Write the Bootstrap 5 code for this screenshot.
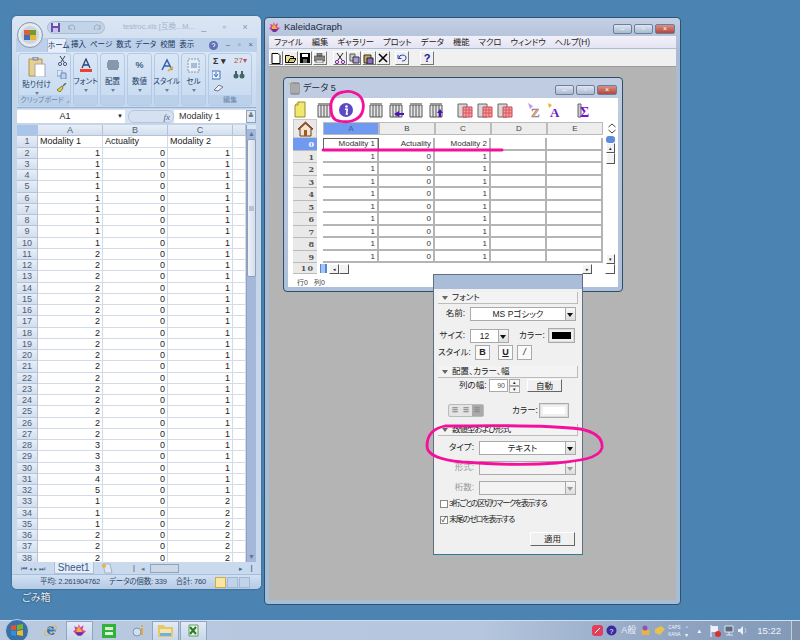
<!doctype html>
<html lang="ja"><head><meta charset="utf-8"><title>KaleidaGraph</title>
<link href="https://cdn.jsdelivr.net/npm/bootstrap@5.3.0/dist/css/bootstrap.min.css" rel="stylesheet">
<style>
body{margin:0;width:800px;height:640px;overflow:hidden;background:#4b83b2;font-family:"Liberation Sans","Noto Sans CJK JP",sans-serif;font-size:8px;line-height:1;color:#222;font-feature-settings:"palt"}
.desk{position:relative;width:800px;height:640px;overflow:hidden}
.win{position:absolute}
/* Excel */
.xl{left:12px;top:16px;width:249px;height:573px;border-radius:5px;background:linear-gradient(#dbe6f4,#c4d5ea 12%,#c9d9ed);padding:0 5px;box-shadow:0 0 2px #2c4f6f}
.xl-title{height:22px;padding-left:30px;color:#a3b3c8;font-size:7.5px}
.qat{width:58px;height:13px;background:#c3d3e8;border-radius:7px;border:1px solid #a7bcd8;gap:7px;padding-left:3px;margin-right:18px}
.xl-glyph{justify-content:space-around;color:#7f93ae;font-size:9px}
.xl-tabs{height:14px;padding-left:31px;background:#bdd0e9;margin:0 -1px}
.xl-tabs span{padding:0 2px;color:#15345e;font-size:7.5px;white-space:nowrap;line-height:14px}
.xl-tabs .on{background:#e6eff9;border:1px solid #a9bfdb;border-bottom:0;border-radius:2px 2px 0 0;width:20px;padding:0;text-align:center;margin-right:2px}
.ribbon{height:56px;background:linear-gradient(#dbe7f6,#c5d8ef);border-bottom:1px solid #97b0d1;padding:1px;gap:2px}
.rg{width:25px;background:linear-gradient(#d9e6f6,#c6daf0);border:1px solid #b4cae4;border-radius:3px;align-items:center;color:#1a3a66;font-size:8px;text-align:center;line-height:1}
.rg small{font-size:7.5px;margin-top:5px;white-space:nowrap}
.rg i{display:block;border-top:3px solid #6c7f9b;border-left:2px solid transparent;border-right:2px solid transparent;margin-top:3px;width:0}
.rg-clip{width:53px}.rg-edit{width:44px}
.rg-foot{margin-top:auto;width:100%;background:#bbd1ea;height:10px;line-height:10px;color:#6a86ab;font-size:7px;white-space:nowrap}
.xl-fx{height:14px;margin-top:1px;background:#d5e2f3;font-size:9px}
.fx-name{width:108px;background:#fff;text-align:center;position:relative;line-height:13px;height:13px;padding-right:12px}
.fx-pill{width:46px;background:#d5e1f1;border:1px solid #b4c6de;border-radius:6px;height:13px;text-align:right;padding-right:3px;font-style:italic;font-family:"Liberation Serif",serif;color:#51627c;line-height:12px}
.fx-val{flex:1;background:#fff;padding-left:5px;line-height:13px;height:13px;color:#333}
.fx-exp{width:10px;height:13px;background:#dfe9f6;border:1px solid #8ba4c4;text-align:center;line-height:9px;font-size:7px}
.xl-body{height:437px;margin-top:2px;overflow:hidden;background:#fff}
.sheet{width:229px;flex:none;display:grid;grid-template-columns:21px 65px 65px 65px 13px;grid-auto-rows:11.25px;font-size:9px;color:#222;overflow:hidden}
.sheet div{border-right:1px solid #d5dbe6;border-bottom:1px solid #d5dbe6;line-height:10.5px;padding:0 2px;text-align:right;white-space:nowrap;overflow:hidden}
.sheet .h{background:linear-gradient(#e7eef8,#d3deed);color:#4c5c75;text-align:center;border-color:#b5c3d8}
.sheet .c{background:#a9c5e9}
.sheet .l{text-align:left}
.vsb{width:10px;background:#a6b8d9;border-left:1px solid #8ea2c6}
.vsb b{display:block;height:10px;background:#a6b8d9;text-align:center;color:#5d7597;font-size:7px;line-height:9px;font-weight:400}
.vsb .t{background:#dbe6f4;height:4px}
.vsb u{display:flex;align-items:center;justify-content:center;height:138px;background:linear-gradient(90deg,#eef2f8,#d6deea);border:1px solid #8f9fb9;border-radius:2px;margin-bottom:auto}
.vsb u::after{content:"";width:5px;height:5px;background:#b9c3d2}
.xl-tab{height:12px;background:#cadaee;font-size:7px;color:#4a6488;gap:5px}
.sheet1{font-size:10px;background:#e4edf8;padding:0 3px;height:12px;line-height:12px;border:1px solid #a9bfdb;border-top:0;color:#3b5a85}
.xl-status{height:15px;background:linear-gradient(#d2e0f2,#b5cae5);margin:0 -5px;padding:0 14px 0 28px;color:#2b4668;font-size:7.5px;border-radius:0 0 5px 5px;gap:9px;white-space:nowrap;border-top:1px solid #a8bfdb;letter-spacing:-.2px}
.view{width:11px;height:11px;background:#c1d3ea;border:1px solid #a1b7d4}
.view.on{background:#fbe6a1;border-color:#cfa94f}
.bin{left:22px;top:593px;color:#e8f0f8;font-size:10px;text-shadow:0 0 2px #123}
/* Kaleida */
.kg{left:264px;top:17px;width:417px;height:588px;border:1px solid #2f536f;border-radius:4px;background:linear-gradient(#c3cfe4,#a9bad5 6%,#a5bdd6);padding:0 4px 4px;display:flex;flex-direction:column}
.cap{height:18px;gap:4px;color:#1b2a3d;font-size:9.500px}
.caps{margin-left:auto;gap:2px;margin-top:3px;margin-right:1px}
.cb{width:19px;height:10px;border:1px solid #6c7e98;background:linear-gradient(#dfe6f0,#aabad0);font-size:7px;color:#fff;text-align:center;line-height:8px;border-radius:2px}
.cb.x{width:20px;background:linear-gradient(#d99086,#b4473b)}
.menu{height:12px;background:linear-gradient(#f2f1f9,#e4e4f3);gap:9px;padding-left:5px;font-size:8.300px;color:#1b1b1b;line-height:12px;white-space:nowrap}
.kbar{height:18px;background:#f0f0f0;padding:2px 0 2px 0;margin-top:1px;border-bottom:1px solid #9b9b9b;gap:.5px}
.kb{width:14px;height:14px;background:#efefef;border:1px solid;border-color:#fff #777 #777 #fff;padding:0;flex:none;display:flex;align-items:center;justify-content:center}
.mdi{flex:1;background:#b4b4b4;position:relative}
.dw{left:14px;top:10px;width:340px;height:215px;border:1px solid #2c4f6a;border-radius:4px;background:linear-gradient(#c0cde2,#aebfd9);padding:0 4px 4px;display:flex;flex-direction:column}
.dw .cap{height:20px;padding-left:1px;font-size:9px;gap:2px}
.dw-in{flex:1;background:#fff;padding:2px 0 0 4px;position:relative}
.dtb{height:19px;gap:4px}
.dtb svg{width:16px;height:16px;flex:none;overflow:visible}
.grid-h{height:19px;align-items:center}
.home{width:24px;height:19px;display:flex;justify-content:center;align-items:center;background:#e8e8e8;border:1px solid #c9c9c9;margin-right:6px;margin-left:1px;flex:none}
.colh{width:56px;height:13px;background:#ededed;border:1px solid #bbb;text-align:center;color:#444;line-height:12px;font-size:8px;flex:none}
.colh.on{background:#6f9af0;color:#3b5ea8}
.grid-r{height:12.560px;align-items:stretch}
.rowh{width:24px;margin:0 6px 0 1px;background:#e9e9e9;text-align:right;padding-right:3px;font:700 8px/12px "DejaVu Serif","Liberation Serif",serif;color:#555;border-bottom:1px solid #bbb;flex:none}
.rowh.on{background:#6f9af0;color:#fff}
.cell{width:56px;background:#fff;border-right:2px solid #b4b4b4;border-bottom:2px solid #b4b4b4;text-align:right;padding-right:2px;line-height:11px;font-size:8px;color:#333;flex:none;white-space:nowrap}
.cell.sel{outline:1px solid #666;outline-offset:-1px}
.dsb{width:14px;flex:none;margin-left:2px}
.sb{width:10px;height:10px;background:#f3f3f3;border:1px solid;border-color:#fff #555 #555 #fff;flex:none;font-size:5px;line-height:8px;text-align:center}
.dstat{font-size:7px;color:#444;padding:5px 0 0 5px;gap:6px}
/* inspector */
.insp{left:433px;top:274px;width:150px;height:281px;border:1px solid #5f6f7f;border-bottom-color:#2f7b9c;background:#f0f0f0;font-size:8.500px;color:#222;padding:14px 4px 0;box-shadow:inset 0 14px 0 #a9bdd9}
.sec{height:12px;background:#f3f3f3;border:1px solid #bcbcbc;border-width:0 1px 1px 0;padding-left:4px;gap:4px;line-height:11px;margin-top:3px;white-space:nowrap}
.sec::before{content:"";border-top:4px solid #666;border-left:3px solid transparent;border-right:3px solid transparent}
.frow{height:15px;margin-top:4px}
.lab{width:27px;text-align:right;margin-right:5px;white-space:nowrap;flex:none}
.sel-box{background:#fff;border:1px solid #aaa;height:14px;position:relative;text-align:center;line-height:13px;padding-right:10px;flex:none}
.sel-box::after{content:"";position:absolute;right:0;top:0;bottom:0;width:10px;background:linear-gradient(#f8f8f8,#ddd);border-left:1px solid #aaa}
.sel-box::before{content:"";position:absolute;z-index:1;right:2px;top:5px;border-top:4px solid #111;border-left:3px solid transparent;border-right:3px solid transparent}
.sel-box.off{background:#f3f3f3}.sel-box.off::before{border-top-color:#999}
.inbox{background:#fff;border:1px solid #aaa;width:19px;height:13px;font-size:7px;line-height:12px;color:#555;text-align:right;padding-right:2px;flex:none}
.spin{width:11px;margin:0 7px 0 1px;font-size:5px;line-height:5px;text-align:center;flex:none;height:13px}
.spin span{border:1px solid #aaa;background:#f7f7f7;height:7px}
.swatch{width:27px;height:15px;border:2px solid #ddd;outline:1px solid #aaa;outline-offset:-1px;padding:2px;flex:none}
.swatch b{display:block;height:100%}
.ibtn{width:15px;height:15px;border:1px solid #aaa;background:#fafafa;text-align:center;line-height:13px;font-size:9px;font-weight:700;font-family:"Liberation Sans",sans-serif;flex:none}
.rbtn{background:#f0f0f0;border:1px solid;border-color:#fff #666 #666 #fff;text-align:center;font-size:8.500px;padding:0;color:#222;border-radius:0;flex:none}
.chk{height:14px;gap:1px;padding-left:2px;white-space:nowrap;font-size:8px;letter-spacing:-1.200px}
.chk span{width:8px;height:8px;background:#fff;border:1px solid #888;flex:none;position:relative;font-size:8px;line-height:6px;text-align:center;letter-spacing:0}
.off-t{color:#999}
/* taskbar */
.task{left:0;top:620px;width:800px;height:20px;background:linear-gradient(90deg,#b9c9e0,#b5c6de 60%,#8ea3c1 85%,#8299b8);border-top:1px solid #d3deec;display:flex;align-items:center}
.tb-i{width:27px;height:20px;display:flex;align-items:center;justify-content:center;flex:none}
.tb-i.act{background:linear-gradient(#e2ebf6,#c8d7ea);border:1px solid #8ea5c3;height:20px}
.tray{margin-left:auto;gap:3px;color:#f4f7fb;font-size:8px;padding-right:0}
.time{font-size:9.500px;margin:0 7px 0 6px;color:#edf2f8;white-space:nowrap}
.showd{width:9px;height:20px;background:#7f93ad;border-left:1px solid #c2cfdf}
.ink{left:0;top:0;width:800px;height:640px;pointer-events:none}
</style></head><body>
<svg width="0" height="0" class="position-absolute"><defs>
<symbol id="cols" viewBox="0 0 16 16"><path d="M2 3h12v12H2z" fill="#e5e5e5" stroke="#555"/><path d="M5 3v12M8 3v12M11 3v12" stroke="#555" fill="none"/><path d="M2 1h12v2H2z" fill="#999"/></symbol>
<symbol id="red" viewBox="0 0 16 16"><path d="M1 2h9v13H1z" fill="#d8d8d8" stroke="#666"/><path d="M6 5h9v10H6z" fill="#f0a0a8" stroke="#c45"/><path d="M6 8h9M6 11h9M9 5v10M12 5v10" stroke="#d55" fill="none"/></symbol>
</defs></svg>
<div class="desk">

<section class="win xl d-flex flex-column">
  <div class="xl-title d-flex align-items-center">
    <div class="qat d-flex align-items-center flex-none">
      <svg width="9" height="9" viewBox="0 0 9 9"><path d="M0 0h9v9H0z" fill="#6a4fb0"/><path d="M2 0h5v3H2z" fill="#dfe6f5"/><path d="M2 5h5v4H2z" fill="#c9c4e8"/></svg>
      <svg width="9" height="9" viewBox="0 0 9 9"><path d="M2 6a3 3 0 1 1 5 1M2 2v4h3" fill="none" stroke="#9aaac0"/></svg>
      <span style="width:3px"></span>
      <svg width="9" height="9" viewBox="0 0 9 9"><path d="M7 6a3 3 0 1 0-5 1M7 2v4H4" fill="none" stroke="#9aaac0"/></svg>
    </div>
    <span class="text-nowrap" style="width:70px">testroc.xls [互換...M...</span>
    <span class="d-flex xl-glyph flex-grow-1"><span>_</span><span>▫</span><span>×</span></span>
  </div>
  <div class="xl-tabs d-flex align-items-stretch">
    <span class="on">ホーム</span><span>挿入</span><span>ページ</span><span>数式</span><span>データ</span><span>校閲</span><span>表示</span>
    <span class="ms-auto d-flex align-items-center gap-2" style="padding:0 4px 0 0;color:#445b7c">
      <svg width="9" height="9" viewBox="0 0 9 9"><circle cx="4.500" cy="4.500" r="4.500" fill="#5f70b8"/><path d="M3 3.500a1.500 1.300 0 1 1 1.800 1.500V6" stroke="#fff" fill="none"/></svg><b class="fw-normal">–</b><b class="fw-normal">▫</b><b class="fw-normal">×</b>
    </span>
  </div>
  <div class="ribbon d-flex">
    <div class="rg rg-clip d-flex flex-column">
      <div class="d-flex w-100" style="height:42px">
        <div class="d-flex flex-column align-items-center" style="width:35px;margin-top:3px">
          <svg width="20" height="20" viewBox="0 0 20 20"><path d="M2 2h13v17H2z" fill="#e8cf92" stroke="#b09252"/><path d="M6 0h5v3H6z" fill="#bfc5d1" stroke="#7a8498"/><path d="M8 7h10v13H8z" fill="#fff" stroke="#a2a9b6"/></svg>
          <small class="mt-1">貼り付け</small><i></i>
        </div>
        <div class="d-flex flex-column align-items-center" style="width:16px;gap:4px;margin-top:2px">
          <svg width="9" height="10" viewBox="0 0 9 10"><path d="M2 0l4 6M7 0L3 6" stroke="#445"/><circle cx="2" cy="8" r="1.600" fill="none" stroke="#558"/><circle cx="7" cy="8" r="1.600" fill="none" stroke="#558"/></svg>
          <svg width="10" height="9" viewBox="0 0 10 9"><path d="M0 0h5v6H0z" fill="#dfe8f5" stroke="#7f9ac2"/><path d="M4 3h5v6H4z" fill="#bcd1ee" stroke="#6a8abf"/></svg>
          <svg width="10" height="9" viewBox="0 0 10 9"><path d="M0 7l5-4 1 2-3 4z" fill="#e7d055" stroke="#8a7a22"/><path d="M6 3l3-3" stroke="#666" stroke-width="1.500"/></svg>
        </div>
      </div>
      <div class="rg-foot">クリップボード ⌟</div>
    </div>
    <div class="rg d-flex flex-column"><svg class="mt-1" width="18" height="15" viewBox="0 0 18 15"><path d="M5 10L9 1l4 9M6.500 7h5" stroke="#25476f" fill="none" stroke-width="1.300"/><path d="M3 11h12v3H3z" fill="#ee4130"/></svg><small>フォント</small><i></i><div class="rg-foot"></div></div>
    <div class="rg d-flex flex-column"><svg class="mt-1" width="18" height="15" viewBox="0 0 18 15"><path d="M4 3h10M3 5h12M3 7h12M3 9h12M4 11h10" stroke="#3d4b61"/></svg><small>配置</small><i></i><div class="rg-foot"></div></div>
    <div class="rg d-flex flex-column"><span class="mt-1" style="height:15px;line-height:15px;font-size:9px;font-weight:700;color:#48607e">%</span><small>数値</small><i></i><div class="rg-foot"></div></div>
    <div class="rg d-flex flex-column"><svg class="mt-1" width="18" height="15" viewBox="0 0 18 15"><path d="M4 12L9 2l5 10M6 8h6" stroke="#3a5db0" fill="none" stroke-width="1.500"/><path d="M10 13l5-4" stroke="#d9b440" stroke-width="2"/></svg><small>スタイル</small><i></i><div class="rg-foot"></div></div>
    <div class="rg d-flex flex-column"><svg class="mt-1" width="18" height="15" viewBox="0 0 18 15"><path d="M3 1h11v13H3z" fill="#e5edf6" stroke="#8797ae" stroke-dasharray="2 1"/><path d="M6 5h6v5H6z" fill="#a8bcd6"/></svg><small>セル</small><i></i><div class="rg-foot"></div></div>
    <div class="rg rg-edit d-flex flex-column"><div class="d-flex flex-wrap justify-content-center" style="gap:4px 5px;margin-top:3px;width:42px">
      <span style="font-size:9px;font-weight:700;width:16px;color:#333">Σ ▾</span><span style="font-size:8px;width:16px;color:#b35353">27▾</span>
      <svg width="16" height="10" viewBox="0 0 16 10"><path d="M0 1h8v8H0z" fill="#eef3fb" stroke="#3d6fbe"/><path d="M4 2v4M2 4l2 3 2-3" stroke="#3d6fbe" fill="none"/></svg><svg width="16" height="10" viewBox="0 0 16 10"><circle cx="3" cy="6" r="2.500" fill="#466"/><circle cx="9" cy="6" r="2.500" fill="#466"/><path d="M3 1v3M9 1v3" stroke="#466" stroke-width="2"/></svg>
      <svg width="14" height="8" viewBox="0 0 14 8"><path d="M1 6l5-5 4 2-5 4z" fill="#eef" stroke="#778"/></svg><span style="width:16px"></span></div>
      <div class="rg-foot">編集</div></div>
  </div>
  <div class="xl-fx d-flex align-items-center">
    <div class="fx-name">A1<b class="position-absolute fw-normal" style="right:2px;font-size:6px">▼</b></div><span style="width:3px"></span>
    <div class="fx-pill">fx</div>
    <div class="fx-val">Modality 1</div>
    <div class="fx-exp">≚</div>
  </div>
  <div class="xl-body d-flex">
    <div class="sheet" id="sheet"></div>
    <div class="vsb d-flex flex-column flex-grow-1"><b class="t"></b><b>▲</b><u></u><b>▼</b></div>
  </div>
  <div class="xl-tab d-flex align-items-center ps-1">
    <span>⏮ ◂ ▸ ⏭</span><span class="sheet1 ms-1">Sheet1</span>
    <svg width="15" height="11" viewBox="0 0 15 11"><path d="M4 1h7l2 9H6z" fill="#dfe8f4" stroke="#9fb3cf"/><circle cx="5" cy="3" r="2" fill="#e5b548"/></svg>
    <span style="margin-left:15px;color:#777">▏◂</span>
    <span style="width:29px;height:9px;background:#cdd8e6;border:1px solid #8fa3bd"></span>
    <span class="ms-auto me-1">▸ ▕</span>
  </div>
  <div class="xl-status d-flex align-items-center">
    <span>平均: 2.261904762</span><span>データの個数: 339</span><span>合計: 760</span>
    <span class="ms-auto d-flex" style="gap:1px"><span class="view on"></span><span class="view"></span><span class="view"></span></span>
  </div>
</section>
<svg class="win" style="left:17px;top:22px" width="26" height="26" viewBox="0 0 26 26"><circle cx="13" cy="13" r="12.500" fill="#e6e9ee" stroke="#8494ac"/><circle cx="13" cy="13" r="9" fill="#cbd4e0"/><path d="M7 8h6v5H7z" fill="#d9642d"/><path d="M13 8h6v5h-6z" fill="#6f9d33"/><path d="M7 13h6v5H7z" fill="#3b6fc2"/><path d="M13 13h6v5h-6z" fill="#edb62e"/></svg>
<div class="win bin">ごみ箱</div>

<section class="win kg">
  <div class="cap d-flex align-items-center">
    <svg width="11" height="11" viewBox="0 0 11 11"><path d="M1 2l3 1 1-3 1 3 3-2-1 4 3 1-3 3H3L0 6l2-1z" fill="#e33e9c"/><path d="M3 5l2-3 2 3 1 2H3z" fill="#e6b52a"/><path d="M2 7h7l-2 3H4z" fill="#6d2ea8"/></svg>
    <span>KaleidaGraph</span>
    <div class="caps d-flex"><span class="cb">–</span><span class="cb">▫</span><span class="cb x">×</span></div>
  </div>
  <nav class="menu d-flex"><span>ファイル</span><span>編集</span><span>ギャラリー</span><span>プロット</span><span>データ</span><span>機能</span><span>マクロ</span><span>ウィンドウ</span><span>ヘルプ(H)</span></nav>
  <div class="kbar d-flex">
    <span class="kb"><svg width="10" height="11" viewBox="0 0 10 11"><path d="M1 .5h6l2 2v8H1z" fill="#fff" stroke="#000"/></svg></span>
    <span class="kb"><svg width="11" height="10" viewBox="0 0 11 10"><path d="M.5 2.500h4l1 1h3v6h-8z" fill="#ece08c" stroke="#000"/><path d="M3 9.500l2-4h6l-2 4z" fill="#d8c660" stroke="#000"/></svg></span>
    <span class="kb"><svg width="10" height="10" viewBox="0 0 10 10"><path d="M0 0h10v10H0z" fill="#000"/><path d="M2 1h6v3H2z" fill="#fff"/><path d="M3 6h4v4H3z" fill="#666"/></svg></span>
    <span class="kb"><svg width="11" height="10" viewBox="0 0 11 10"><path d="M3 0h5v3H3zM0 3h11v5H0z" fill="#888" stroke="#333" stroke-width=".5"/><path d="M2 7h7v3H2z" fill="#ddd" stroke="#333" stroke-width=".5"/></svg></span>
    <span style="width:5px"></span>
    <span class="kb"><svg width="10" height="11" viewBox="0 0 10 11"><path d="M2 0l5 7M8 0L3 7" stroke="#222"/><circle cx="2" cy="9" r="1.600" fill="none" stroke="#7a1fa2"/><circle cx="8" cy="9" r="1.600" fill="none" stroke="#7a1fa2"/></svg></span>
    <span class="kb"><svg width="11" height="11" viewBox="0 0 11 11"><path d="M1 1h5v7H1z" fill="#ccc" stroke="#555"/><path d="M4 4h6v6H4z" fill="#b09ad8" stroke="#333"/></svg></span>
    <span class="kb"><svg width="11" height="11" viewBox="0 0 11 11"><path d="M1 2h7v8H1z" fill="#c7a65a" stroke="#333"/><path d="M4 5h6v6H4z" fill="#8a6fc8" stroke="#222"/></svg></span>
    <span class="kb"><svg width="10" height="10" viewBox="0 0 10 10"><path d="M1 1l8 8M9 1L1 9" stroke="#000" stroke-width="1.500"/></svg></span>
    <span style="width:4px"></span>
    <span class="kb"><svg width="10" height="8" viewBox="0 0 10 8"><path d="M2 4a3.500 3 0 1 1 3 3M1 1v3.500h3.500" stroke="#2d3fb5" fill="none"/></svg></span>
    <span style="width:10px"></span>
    <span class="kb" style="color:#1b149c;font-weight:700;font-size:11px;font-family:'Liberation Sans',sans-serif">?</span>
  </div>
  <div class="mdi">
    <section class="win dw">
      <div class="cap d-flex align-items-center">
        <svg width="12" height="13" viewBox="0 0 12 13"><path d="M2 1h8v11H2z" fill="#ddd" stroke="#777"/><path d="M4 1v11M6 1v11M8 1v11" stroke="#777"/><path d="M0 2h3l1-1" stroke="#c9b227" fill="none"/></svg>
        <span>データ 5</span>
        <div class="caps d-flex"><span class="cb">–</span><span class="cb">▫</span><span class="cb x">×</span></div>
      </div>
      <div class="dw-in">
        <div class="dtb d-flex align-items-center">
          <svg viewBox="0 0 16 16"><path d="M3 3l3-3h7v15H3z" fill="#f1e86f" stroke="#9a8d2a"/><path d="M3 3h3V0" fill="#fff7a8" stroke="#9a8d2a"/></svg>
          <svg style="margin-left:4px"><use href="#cols"/></svg>
          <svg viewBox="0 0 16 16" style="margin-left:2px"><circle cx="8" cy="8" r="7" fill="#5a48c4"/><circle cx="8.500" cy="4.500" r="1.300" fill="#fff"/><path d="M7 7.200h2.300L8.500 12H10" stroke="#fff" stroke-width="1.600" fill="none"/></svg>
          <svg style="margin-left:10px"><use href="#cols"/></svg>
          <svg viewBox="0 0 16 16"><use href="#cols"/><path d="M16 11h-5v-2l-5 3 5 3v-2h5z" fill="#4b14b5"/></svg>
          <svg><use href="#cols"/></svg>
          <svg viewBox="0 0 16 16"><use href="#cols"/><path d="M12 7l-3 4h2v4h2v-4h2z" fill="#4b14b5"/></svg>
          <svg style="margin-left:9px"><use href="#red"/></svg>
          <svg><use href="#red"/></svg>
          <svg><use href="#red"/></svg>
          <svg viewBox="0 0 16 16" style="margin-left:10px"><path d="M1 1l5 3-3 3z" fill="#bb9be8"/><text x="4" y="15" font-size="13" font-weight="700" font-family="Liberation Serif" fill="#e8b61c" stroke="#8a5fd0" stroke-width=".4">Z</text></svg>
          <svg viewBox="0 0 16 16"><path d="M1 1l4 2-3 3z" fill="#e8b61c"/><text x="3" y="15" font-size="13" font-weight="700" font-family="Liberation Serif" fill="#6d18d0">A</text></svg>
          <svg viewBox="0 0 16 16" style="margin-left:10px"><path d="M1 2h3v13H1z" fill="#ccc" stroke="#666"/><text x="3" y="15" font-size="14" font-weight="700" font-family="Liberation Serif" fill="#7a10d8">Σ</text></svg>
        </div>
        <div class="grid-h d-flex">
          <span class="home"><svg width="17" height="16" viewBox="0 0 17 16"><path d="M8.500 1L1 8h2v7h11V8h2z" fill="#f4e5cf" stroke="#6b3c1f"/><path d="M7 9h3v6H7z" fill="#a05a26"/><path d="M8.500 1L1 8l1 1 6.500-6 6.500 6 1-1z" fill="#8a4a22"/></svg></span>
          <span class="colh on">A</span><span class="colh">B</span><span class="colh">C</span><span class="colh">D</span><span class="colh">E</span>
          <svg class="dsb" width="9" height="13" viewBox="0 0 9 13"><path d="M1 5l3.500-3L8 5M1 8l3.500 3L8 8" fill="none" stroke="#444"/></svg>
        </div>
        <div id="dgrid"></div>
        <div class="d-flex align-items-center" style="height:11px">
          <span class="rowh" style="height:11px;line-height:10px;letter-spacing:1px;margin-right:3px">10</span>
          <svg width="7" height="9" viewBox="0 0 7 9"><path d="M0 0h7v9H0z" fill="#4f8ad6"/><path d="M2 0v9M4 0v9" stroke="#fff"/></svg>
          <span class="sb" style="margin-left:2px">◂</span><span class="sb" style="margin-right:auto"></span>
          <span class="sb" style="margin-right:13px">▸</span><span class="sb" style="width:10px;margin-right:3px;background:#fff"></span>
        </div>
        <div class="dstat d-flex"><span>行0</span><span>列0</span></div>
        <div class="position-absolute d-flex flex-column" style="right:3px;top:38px;width:9px;height:128px"><span style="height:7px;background:#5c8be0;border-radius:3px"></span><span class="sb" style="width:9px">▴</span><span class="sb" style="width:9px;height:11px"></span><span class="sb mt-auto" style="width:9px">▾</span></div>
      </div>
    </section>
  </div>
</section>

<section class="win insp">
  <div class="sec d-flex align-items-center">フォント</div>
  <div class="frow d-flex align-items-center" style="margin-top:2px"><span class="lab">名前:</span><div class="sel-box" style="width:106px">MS Pゴシック</div></div>
  <div class="frow d-flex align-items-center" style="margin-top:7px"><span class="lab">サイズ:</span><div class="sel-box" style="width:39px">12</div><span class="text-nowrap" style="width:26px;margin-left:10px">カラー:</span><span class="swatch" style="margin-left:3px"><b class="bg-black"></b></span></div>
  <div class="frow d-flex align-items-center" style="margin-top:2px"><span class="lab" style="width:32px">スタイル:</span><span class="ibtn">B</span><span class="ibtn ms-2"><u>U</u></span><span class="ibtn ms-1 fst-italic fw-normal">/</span></div>
  <div class="sec d-flex align-items-center" style="margin-top:6px">配置、カラー、幅</div>
  <div class="frow d-flex align-items-center" style="margin-top:0;padding-left:21px"><span class="text-nowrap" style="width:30px">列の幅:</span><span class="inbox">90</span><span class="spin d-flex flex-column"><span>▴</span><span>▾</span></span><button class="rbtn" style="width:35px;height:13px;line-height:10px">自動</button></div>
  <div class="d-flex align-items-center" style="margin-top:10px;padding-left:10px"><span class="d-flex" style="width:36px;height:13px;border:1px solid #bbb;border-radius:2px;background:#e4e4e4;font-size:6px;line-height:11px;color:#888;text-align:center"><span class="flex-fill">☰</span><span class="flex-fill">☰</span><span class="flex-fill" style="background:#aaa">☰</span></span><span class="text-nowrap" style="margin-left:28px;width:27px">カラー:</span><span class="swatch" style="width:30px"><b class="bg-white"></b></span></div>
  <div class="sec d-flex align-items-center" style="margin-top:6px;letter-spacing:-1px">数値型および形式</div>
  <div class="frow d-flex align-items-center" style="margin-top:4px"><span class="lab" style="width:36px">タイプ:</span><div class="sel-box" style="width:97px">テキスト</div></div>
  <div class="frow d-flex align-items-center" style="margin-top:5px"><span class="lab off-t" style="width:36px">形式:</span><div class="sel-box off" style="width:97px"></div></div>
  <div class="frow d-flex align-items-center" style="margin-top:5px"><span class="lab off-t" style="width:36px">桁数:</span><div class="sel-box off" style="width:97px"></div></div>
  <div class="chk d-flex align-items-center" style="margin-top:2px"><span></span>3桁ごとの区切りマークを表示する</div>
  <div class="chk d-flex align-items-center" style="margin-top:2px"><span>✓</span>末尾のゼロを表示する</div>
  <div class="d-flex justify-content-end" style="padding-right:3px;margin-top:5px"><button class="rbtn" style="width:45px;height:14px;line-height:12px">適用</button></div>
</section>

<footer class="win task">
  <svg width="24" height="24" viewBox="0 0 24 24" style="margin:0 0 0 5px;overflow:visible"><circle cx="12" cy="12" r="11.500" fill="#3a6fa8" stroke="#bcd0e6"/><path d="M6 7l5-1v5H6z" fill="#e4542c"/><path d="M12 6l6-1v5l-6 1z" fill="#79b32d"/><path d="M6 12h5v5l-5-1z" fill="#2e93d8"/><path d="M12 12l6-1v6l-6-1z" fill="#edbb27"/></svg>
  <span class="tb-i ms-2"><svg width="15" height="15" viewBox="0 0 15 15"><path d="M13 7.500H5a3 3 0 0 1 5.500-2M11 10a3.500 3.500 0 0 1-6-2" fill="none" stroke="#2a6fc4" stroke-width="2"/><ellipse cx="7.500" cy="7.500" rx="7" ry="3" fill="none" stroke="#e5b53b" transform="rotate(-35 7.500 7.500)"/></svg></span>
  <span class="tb-i act" style="margin-left:2px"><svg width="13" height="13" viewBox="0 0 11 11"><path d="M1 2l3 1 1-3 1 3 3-2-1 4 3 1-3 3H3L0 6l2-1z" fill="#e33e9c"/><path d="M3 5l2-3 2 3 1 2H3z" fill="#e6b52a"/><path d="M2 7h7l-2 3H4z" fill="#6d2ea8"/></svg></span>
  <span class="tb-i" style="margin-left:2px"><svg width="14" height="14" viewBox="0 0 14 14"><path d="M0 0h14v14H0z" fill="#30b33c"/><path d="M3 3h8v3H3z" fill="#d9f0c8"/><path d="M3 8h8v3H3z" fill="#e7f3e0"/></svg></span>
  <span class="tb-i" style="margin-left:2px"><svg width="14" height="14" viewBox="0 0 14 14"><circle cx="6" cy="8" r="4" fill="#cfe0f2" stroke="#7f95b5"/><path d="M11 4v7" stroke="#e5a63a" stroke-width="2"/><circle cx="11" cy="2" r="1" fill="#e5a63a"/></svg></span>
  <span class="tb-i act" style="margin-left:1px"><svg width="15" height="13" viewBox="0 0 15 13"><path d="M0 1h6l1 2h8v10H0z" fill="#e8c766"/><path d="M2 5h11v6H2z" fill="#f6e5a8"/><path d="M2 9h11v3H2z" fill="#73aee0"/></svg></span>
  <span class="tb-i act" style="margin-left:1px"><svg width="13" height="13" viewBox="0 0 13 13"><path d="M2 1h9v11H2z" fill="#ecf5e5" stroke="#6a9a5c"/><path d="M3 3l6 7M9 3l-6 7" stroke="#257a2e" stroke-width="2"/></svg></span>
  <div class="tray d-flex align-items-center">
    <svg width="11" height="11" viewBox="0 0 11 11"><rect width="11" height="11" rx="3" fill="#e0405c"/><path d="M3 8l5-5" stroke="#fff"/></svg>
    <svg width="11" height="11" viewBox="0 0 11 11"><circle cx="5.500" cy="5.500" r="5" fill="#3a2aa0"/><text x="3.500" y="8.500" font-size="7" fill="#fff" font-family="Liberation Sans">?</text></svg>
    <span class="text-nowrap" style="font-size:9px;opacity:.9;margin:0 1px">A般</span>
    <svg width="11" height="11" viewBox="0 0 11 11"><path d="M1 5h9l-1 5H2z" fill="#e2b34a"/><circle cx="5" cy="3" r="2.500" fill="#9a4fb3"/></svg>
    <svg width="11" height="9" viewBox="0 0 11 9"><path d="M1 3l6-3 4 3-5 6-5-2z" fill="#e8c04d"/></svg>
    <span class="text-center" style="font-size:4.500px;line-height:7px;width:11px">CAPS<br>KANA</span>
    <span class="text-center" style="font-size:6px;line-height:8px;width:9px">▫<br>▾</span>
    <span style="font-size:6px;width:7px;margin:0 2px">▲</span>
    <svg width="11" height="12" viewBox="0 0 11 12" style="margin-left:2px"><path d="M1 0v12" stroke="#fff"/><path d="M1 1h7v6H1z" fill="#eef"/><circle cx="8" cy="9" r="3" fill="#d9302c"/></svg>
    <svg width="11" height="11" viewBox="0 0 11 11"><path d="M1 1h8v6H1z" fill="#5b6a80" stroke="#dfe6ee"/><path d="M5 7v3M2 10h7" stroke="#dfe6ee"/></svg>
    <svg width="10" height="11" viewBox="0 0 10 11"><path d="M0 4h2l3-3v9L2 7H0z" fill="#e8eef6"/><path d="M7 3a4 4 0 0 1 0 5" stroke="#c2cee0" fill="none"/></svg>
    <span class="time">15:22</span><span class="showd"></span>
  </div>
</footer>

<svg class="win ink" viewBox="0 0 800 640">
  <g fill="none" stroke="#f5109c" stroke-width="2.800" stroke-linecap="round">
    <path d="M343 92c-7 1-13 7-12 16 0 6 1 12 8 13 9 2 19 0 23-8 3-8 1-17-7-20-4-2-8-2-12-1z"/>
    <path d="M323 150h179"/>
    <path d="M445 426c-10 2-18 8-18 20 0 10 15 14 35 16 40 3 70 3 95 1 20-2 42-4 45-15 1-10-6-16-22-19-40-5-100-3-135-3z"/>
  </g>
</svg>
</div>
<script src="https://cdn.jsdelivr.net/npm/bootstrap@5.3.0/dist/js/bootstrap.bundle.min.js"></script>
<script>
const A=[1,1,1,1,1,1,1,1,1,2,2,2,2,2,2,2,2,2,2,2,2,2,2,2,2,2,3,3,3,4,5,1,1,1,2,2,2];
let h='<div class="h c"></div><div class="h">A</div><div class="h">B</div><div class="h">C</div><div class="h"></div>'
+'<div class="h">1</div><div class="l">Modality 1</div><div class="l">Actuality</div><div class="l">Modality 2</div><div></div>';
A.forEach((v,i)=>{h+=`<div class="h">${i+2}</div><div>${v}</div><div>0</div><div>${i<31?1:2}</div><div></div>`});
document.getElementById('sheet').innerHTML=h;
let g='<div class="grid-r d-flex"><span class="rowh on">0</span><span class="cell sel">Modality 1</span><span class="cell">Actuality</span><span class="cell">Modality 2</span><span class="cell"></span><span class="cell"></span></div>';
for(let r=1;r<10;r++)g+=`<div class="grid-r d-flex"><span class="rowh">${r}</span><span class="cell">1</span><span class="cell">0</span><span class="cell">1</span><span class="cell"></span><span class="cell"></span></div>`;
document.getElementById('dgrid').innerHTML=g;
</script>
</body></html>
